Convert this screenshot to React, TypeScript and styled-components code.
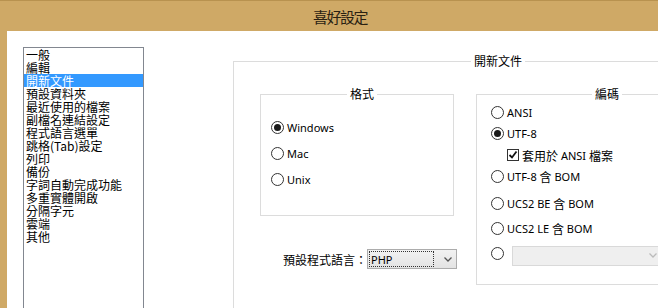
import React from 'react';
import styled, { createGlobalStyle } from 'styled-components';

const GlobalStyle = createGlobalStyle`
  html, body {
    margin: 0;
    padding: 0;
    width: 658px;
    height: 308px;
    overflow: hidden;
    background: #fff;
  }
  body {
    font-family: "Noto Sans", "Noto Sans CJK TC", sans-serif;
    color: #000;
  }
`;

const cjk = `"Noto Sans CJK TC", "Noto Sans", sans-serif`;
const latin = `"Noto Sans", "Noto Sans CJK TC", sans-serif`;

const Window = styled.div`
  width: 658px;
  height: 308px;
  display: flex;
  flex-direction: column;
  overflow: hidden;
`;

const TitleBar = styled.div`
  width: 680px;
  height: 30px;
  flex: none;
  background: #cfa966;
  border-top: 1px solid #b8924f;
  box-sizing: border-box;
  display: flex;
  justify-content: center;
  align-items: center;
`;

const Title = styled.div`
  font-family: ${cjk};
  font-size: 15px;
  letter-spacing: -1.5px;
  color: #2a2112;
  padding-top: 1px;
`;

const Frame = styled.div`
  flex: 1;
  min-height: 0;
  display: flex;
  background: #cfa966;
  padding: 1px 0 0 7px;
`;

const Client = styled.div`
  flex: 1;
  background: #fff;
  display: flex;
  align-items: flex-start;
  padding: 16px 0 0 16px;
  overflow: hidden;
`;

const ListBox = styled.div`
  width: 121px;
  height: 300px;
  flex: none;
  box-sizing: border-box;
  border: 1px solid #828790;
  padding: 0;
  font-family: ${cjk};
  font-size: 12px;
`;

const ListItem = styled.div<{ $selected?: boolean }>`
  height: 13px;
  line-height: 13px;
  padding-left: 2px;
  white-space: nowrap;
  background: ${p => (p.$selected ? '#3399ff' : 'transparent')};
  color: ${p => (p.$selected ? '#fff' : '#000')};
`;

const Group = styled.fieldset<{ $w: number; $h: number; $ml?: number; $pt: number; $pl: number }>`
  margin: 0 0 0 ${p => p.$ml || 0}px;
  padding: ${p => p.$pt}px 0 0 ${p => p.$pl}px;
  width: ${p => p.$w}px;
  height: ${p => p.$h}px;
  min-width: 0;
  flex: none;
  box-sizing: border-box;
  border: 1px solid #dcdcdc;
`;

const OuterGroup = styled(Group)`
  margin-top: 7px;
`;

const Legend = styled.legend`
  margin: 0 auto;
  padding: 0 3px;
  font-family: ${cjk};
  font-size: 12px;
  line-height: 14px;
  height: 14px;
`;

const Columns = styled.div`
  display: flex;
  align-items: flex-start;
`;

const LeftCol = styled.div`
  display: flex;
  flex-direction: column;
  width: 194px;
`;

const OptionList = styled.div<{ $gap?: number }>`
  display: flex;
  flex-direction: column;
  gap: ${p => p.$gap || 0}px;
`;

const OptionRow = styled.div<{ $mt?: number; $indent?: number }>`
  display: flex;
  align-items: center;
  height: 16px;
  margin-top: ${p => p.$mt || 0}px;
  margin-left: ${p => p.$indent || 0}px;
  font-family: ${latin};
  font-size: 11px;
  white-space: nowrap;
`;

const Radio = styled.span<{ $checked?: boolean }>`
  width: 13px;
  height: 13px;
  box-sizing: border-box;
  border: 1px solid #333;
  border-radius: 50%;
  background: #fff;
  flex: none;
  display: flex;
  align-items: center;
  justify-content: center;
  margin-right: 3px;
  &::after {
    content: '';
    width: 7px;
    height: 7px;
    border-radius: 50%;
    background: ${p => (p.$checked ? '#1a1a1a' : 'transparent')};
  }
`;

const CheckBox = styled.span`
  width: 12px;
  height: 12px;
  box-sizing: border-box;
  border: 1px solid #333;
  background: #fff;
  flex: none;
  display: flex;
  align-items: center;
  justify-content: center;
  margin-right: 3px;
`;

const Cjk = styled.span`
  font-family: ${cjk};
  font-size: 12px;
`;

const LangRow = styled.div`
  display: flex;
  align-items: center;
  margin-top: 33px;
  padding-left: 23px;
  height: 20px;
`;

const Label = styled.span`
  font-family: ${cjk};
  font-size: 12px;
  width: 84px;
  white-space: nowrap;
`;

const Combo = styled.div<{ $w: number; $disabled?: boolean }>`
  width: ${p => p.$w}px;
  height: 20px;
  box-sizing: border-box;
  border: 1px solid ${p => (p.$disabled ? '#d9d9d9' : '#acacac')};
  background: ${p => (p.$disabled ? '#efefef' : 'linear-gradient(#f2f2f2, #e3e3e3)')};
  display: flex;
  align-items: center;
  padding: 1px 4px 1px 1px;
  flex: none;
`;

const DisabledCombo = styled(Combo)`
  margin: 5px 0 0 5px;
`;

const ComboText = styled.div`
  flex: 1;
  height: 100%;
  box-sizing: border-box;
  border: 1px dotted #333;
  font-family: ${latin};
  font-size: 11px;
  line-height: 15px;
  padding-left: 1px;
  margin-right: 10px;
`;

const ComboSpacer = styled.div`
  flex: 1;
`;

const Chevron = ({ color }: { color: string }) => (
  <svg width="8" height="5" viewBox="0 0 8 5">
    <path d="M0.5 0.5 L4 4 L7.5 0.5" fill="none" stroke={color} strokeWidth="1.3" />
  </svg>
);

const Check = () => (
  <svg width="10" height="10" viewBox="0 0 10 10">
    <path d="M1.5 5 L4 7.5 L8.5 1.5" fill="none" stroke="#111" strokeWidth="1.8" />
  </svg>
);

const menuItems = [
  '一般',
  '編輯',
  '開新文件',
  '預設資料夾',
  '最近使用的檔案',
  '副檔名連結設定',
  '程式語言選單',
  '跳格(Tab)設定',
  '列印',
  '備份',
  '字詞自動完成功能',
  '多重實體開啟',
  '分隔字元',
  '雲端',
  '其他',
];

const App = () => {
  return (
    <Window>
      <GlobalStyle />
      <TitleBar>
        <Title>喜好設定</Title>
      </TitleBar>
      <Frame>
        <Client>
          <ListBox>
            {menuItems.map(item => (
              <ListItem key={item} $selected={item === '開新文件'}>
                {item}
              </ListItem>
            ))}
          </ListBox>

          <OuterGroup $w={504} $h={280} $ml={89} $pt={19} $pl={26}>
            <Legend>開新文件</Legend>
            <Columns>
              <LeftCol>
                <Group $w={194} $h={129} $pt={18} $pl={10}>
                  <Legend>格式</Legend>
                  <OptionList $gap={10}>
                    <OptionRow>
                      <Radio $checked />
                      Windows
                    </OptionRow>
                    <OptionRow>
                      <Radio />
                      Mac
                    </OptionRow>
                    <OptionRow>
                      <Radio />
                      Unix
                    </OptionRow>
                  </OptionList>
                </Group>
                <LangRow>
                  <Label>預設程式語言：</Label>
                  <Combo $w={90}>
                    <ComboText>PHP</ComboText>
                    <Chevron color="#555" />
                  </Combo>
                </LangRow>
              </LeftCol>

              <Group $w={248} $h={198} $ml={22} $pt={3} $pl={14}>
                <Legend>編碼</Legend>
                <OptionList>
                  <OptionRow>
                    <Radio />
                    ANSI
                  </OptionRow>
                  <OptionRow $mt={5}>
                    <Radio $checked />
                    UTF-8
                  </OptionRow>
                  <OptionRow $mt={6} $indent={16}>
                    <CheckBox>
                      <Check />
                    </CheckBox>
                    <Cjk>套用於</Cjk>&nbsp;ANSI&nbsp;<Cjk>檔案</Cjk>
                  </OptionRow>
                  <OptionRow $mt={5}>
                    <Radio />
                    UTF-8&nbsp;<Cjk>含</Cjk>&nbsp;BOM
                  </OptionRow>
                  <OptionRow $mt={11}>
                    <Radio />
                    UCS2 BE&nbsp;<Cjk>含</Cjk>&nbsp;BOM
                  </OptionRow>
                  <OptionRow $mt={9}>
                    <Radio />
                    UCS2 LE&nbsp;<Cjk>含</Cjk>&nbsp;BOM
                  </OptionRow>
                  <OptionRow $mt={9}>
                    <Radio />
                    <DisabledCombo $w={150} $disabled>
                      <ComboSpacer />
                      <Chevron color="#bbb" />
                    </DisabledCombo>
                  </OptionRow>
                </OptionList>
              </Group>
            </Columns>
          </OuterGroup>
        </Client>
      </Frame>
    </Window>
  );
};

export default App;
